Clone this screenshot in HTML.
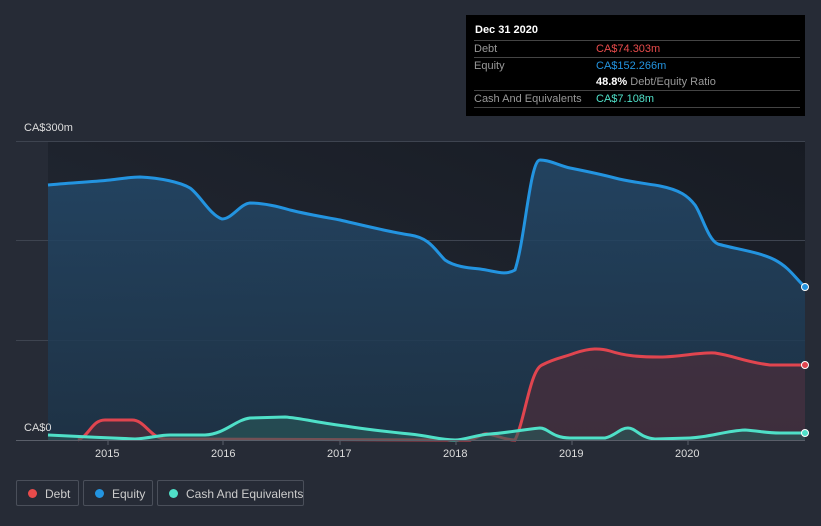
<!DOCTYPE html>
<html style="overflow:hidden"><head><style>
html,body{margin:0;width:821px;height:526px;overflow:hidden}
body{background:#262b36;font-family:"Liberation Sans",sans-serif;position:relative}
.tt{position:absolute;left:466px;top:15px;width:339px;height:101px;background:#000;}
.tt .h{position:absolute;left:9px;top:9px;color:#fff;font-weight:bold;font-size:11px}
.row{position:absolute;left:8px;width:326px;border-top:1px solid #444;font-size:11px;color:#999;height:16px;line-height:16px;white-space:nowrap}
.row span{position:absolute;left:122px}
.leg{position:absolute;top:480px;height:26px;border:1px solid #4a4f5a;border-radius:2px;color:#ccc;font-size:12px;line-height:26px;box-sizing:border-box;white-space:nowrap}
.leg i{position:absolute;left:11px;top:8px;width:9px;height:9px;border-radius:50%}
.ax{position:absolute;color:#ddd;font-size:11px}
</style></head><body>
<svg width="821" height="526" style="position:absolute;left:0;top:0">
<defs>
<linearGradient id="bg" x1="0" x2="1" y1="1" y2="0"><stop offset="0" stop-color="#252b37"/><stop offset="1" stop-color="#171b23"/></linearGradient>
<linearGradient id="eq" x1="0" y1="0" x2="0" y2="1"><stop offset="0" stop-color="#24496a"/><stop offset="1" stop-color="#1d3347"/></linearGradient>
</defs>
<rect x="48" y="141" width="757" height="299" fill="url(#bg)"/>
<g stroke="#3e4450" stroke-width="1"><line x1="16" x2="805" y1="141.5" y2="141.5"/><line x1="16" x2="805" y1="240.5" y2="240.5"/><line x1="16" x2="805" y1="340.5" y2="340.5"/></g>
<path d="M48,185 C70,183 90,182 110,180 C120,179 130,177 140,177 C160,178 180,182 190,188 C200,195 210,215 222,219 C232,219 240,204 250,203 C265,203 280,207 290,210 C310,215 330,218 340,220 C370,227 390,232 410,235 C430,238 435,250 445,260 C455,267 470,268 480,269 C495,271 505,276 515,270 C525,240 530,160 540,160 C550,160 560,166 570,168 C590,172 600,174 615,178 C630,182 650,184 660,186 C680,190 688,196 695,205 C702,215 708,240 718,244 C735,249 760,252 775,260 C790,268 795,278 805,287 L805,440 L48,440Z" fill="url(#eq)" opacity="0.85"/>
<path d="M48,185 C70,183 90,182 110,180 C120,179 130,177 140,177 C160,178 180,182 190,188 C200,195 210,215 222,219 C232,219 240,204 250,203 C265,203 280,207 290,210 C310,215 330,218 340,220 C370,227 390,232 410,235 C430,238 435,250 445,260 C455,267 470,268 480,269 C495,271 505,276 515,270 C525,240 530,160 540,160 C550,160 560,166 570,168 C590,172 600,174 615,178 C630,182 650,184 660,186 C680,190 688,196 695,205 C702,215 708,240 718,244 C735,249 760,252 775,260 C790,268 795,278 805,287" fill="none" stroke="#2394e0" stroke-width="3"/>
<path d="M78,440 C90,435 92,420 105,420 L132,420 C145,420 150,438 165,439 L470,440 C478,438 482,433 488,434 C496,435 505,440 515,440 C525,420 530,370 542,365 C555,358 565,357 575,353 C590,348 600,348 610,351 C625,356 640,357 660,357 C680,357 700,352 715,353 C735,356 745,362 770,365 L805,365 L805,440 Z" fill="#4b2d3b" opacity="0.7"/>
<path d="M78,440 C90,435 92,420 105,420 L132,420 C145,420 150,438 165,439 L470,440 C478,438 482,433 488,434 C496,435 505,440 515,440 C525,420 530,370 542,365 C555,358 565,357 575,353 C590,348 600,348 610,351 C625,356 640,357 660,357 C680,357 700,352 715,353 C735,356 745,362 770,365 L805,365" fill="none" stroke="#e0454f" stroke-width="3"/>
<path d="M48,435 C70,436 110,438 135,439 C150,438 160,435 170,435 L205,435 C225,434 235,420 250,418 L285,417 C300,418 320,423 345,426 C370,430 390,432 410,434 C430,436 440,440 455,440 C465,440 475,435 490,434 C505,433 520,430 540,428 C548,428 552,438 570,438 L605,438 C615,436 620,428 628,428 C636,428 640,438 655,439 L690,438 C710,437 725,431 745,430 C760,431 765,433 780,433 L805,433 L805,440 L48,440Z" fill="#2a5a5a" opacity="0.6"/>
<path d="M48,435 C70,436 110,438 135,439 C150,438 160,435 170,435 L205,435 C225,434 235,420 250,418 L285,417 C300,418 320,423 345,426 C370,430 390,432 410,434 C430,436 440,440 455,440 C465,440 475,435 490,434 C505,433 520,430 540,428 C548,428 552,438 570,438 L605,438 C615,436 620,428 628,428 C636,428 640,438 655,439 L690,438 C710,437 725,431 745,430 C760,431 765,433 780,433 L805,433" fill="none" stroke="#4fe0c8" stroke-width="3"/>
<line x1="16" x2="805" y1="440.5" y2="440.5" stroke="#5a5f6a"/>
<g stroke="#5a5f6a"><line x1="108" x2="108" y1="440" y2="445"/><line x1="223" x2="223" y1="440" y2="445"/><line x1="340" x2="340" y1="440" y2="445"/><line x1="456" x2="456" y1="440" y2="445"/><line x1="572" x2="572" y1="440" y2="445"/><line x1="688" x2="688" y1="440" y2="445"/></g>
<circle cx="805" cy="287" r="3.5" fill="#2394e0" stroke="#fff" stroke-width="1"/>
<circle cx="805" cy="365" r="3.5" fill="#e0454f" stroke="#fff" stroke-width="1"/>
<circle cx="805" cy="433" r="3.5" fill="#4fe0c8" stroke="#fff" stroke-width="1"/>
</svg>
<div class="ax" style="left:24px;top:122px">CA$300m</div>
<div class="ax" style="left:24px;top:422px">CA$0</div>
<div class="ax" style="left:95px;top:448px">2015</div>
<div class="ax" style="left:211px;top:448px">2016</div>
<div class="ax" style="left:327px;top:448px">2017</div>
<div class="ax" style="left:443px;top:448px">2018</div>
<div class="ax" style="left:559px;top:448px">2019</div>
<div class="ax" style="left:675px;top:448px">2020</div>
<div class="tt">
<div class="h">Dec 31 2020</div>
<div class="row" style="top:25px">Debt<span style="color:#e84b4b">CA$74.303m</span></div>
<div class="row" style="top:42px">Equity<span style="color:#2394e0">CA$152.266m</span></div>
<div class="row" style="top:59px;border-top:none"><span style="color:#fff;font-weight:bold">48.8% <b style="color:#999;font-weight:normal">Debt/Equity Ratio</b></span></div>
<div class="row" style="top:75px;border-bottom:1px solid #444">Cash And Equivalents<span style="color:#4fe0c8">CA$7.108m</span></div>
</div>
<div class="leg" style="left:16px;width:63px"><i style="background:#e84b4b"></i><span style="position:absolute;left:28px">Debt</span></div>
<div class="leg" style="left:83px;width:70px"><i style="background:#2394e0"></i><span style="position:absolute;left:28px">Equity</span></div>
<div class="leg" style="left:157px;width:147px"><i style="background:#4fe0c8"></i><span style="position:absolute;left:28px">Cash And Equivalents</span></div>
</body></html>
